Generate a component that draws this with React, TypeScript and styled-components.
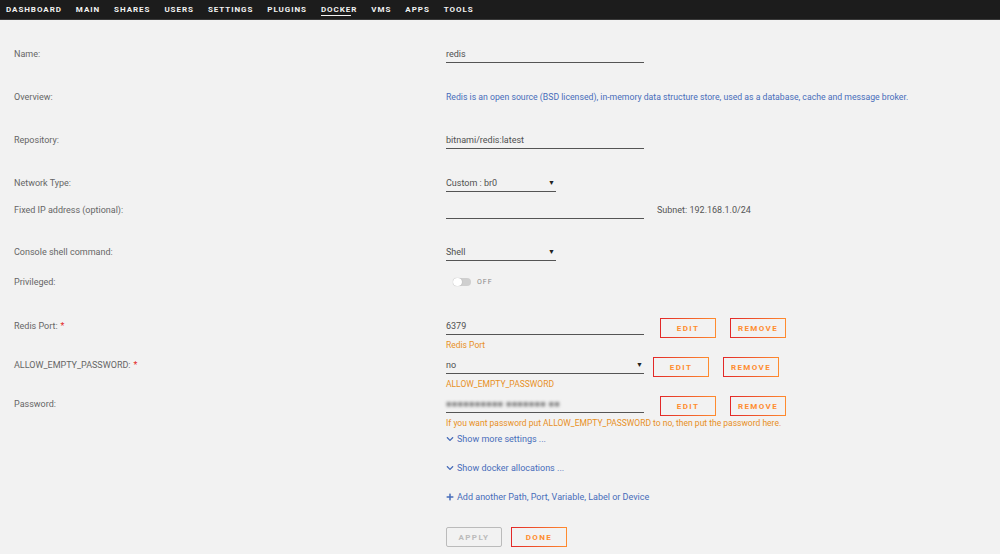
import React from 'react';
import styled, { createGlobalStyle } from 'styled-components';
import { FaChevronDown, FaPlus } from 'react-icons/fa';

const GlobalStyle = createGlobalStyle`
  html, body {
    margin: 0;
    padding: 0;
    background: #f2f2f2;
    font-family: Roboto, "Liberation Sans", sans-serif;
  }
`;

const StyledNav = styled.nav`
  display: flex;
  flex-direction: row;
  align-items: center;
  gap: 14px;
  height: 19px;
  padding: 0 6px;
  background-color: #1c1c1c;
  border-bottom: 1px solid #3a3a3a;
`;

const StyledNavItem = styled.span<{ $active?: boolean }>`
  position: relative;
  color: #f2f2f2;
  font-size: 8px;
  font-weight: 700;
  letter-spacing: 0.95px;
  line-height: 19px;

  &::after {
    content: '';
    display: ${(p) => (p.$active ? 'block' : 'none')};
    position: absolute;
    left: 0;
    bottom: 3px;
    width: 30px;
    height: 1.5px;
    background: #f2f2f2;
  }
`;

const StyledForm = styled.div`
  display: flex;
  flex-direction: column;
  padding: 26px 0 0 14px;
`;

const StyledRow = styled.div<{ $h: number }>`
  display: grid;
  grid-template-columns: 432px 1fr;
  align-items: start;
  height: ${(p) => p.$h}px;
`;

const StyledLabel = styled.div`
  color: #666;
  font-size: 9px;
  line-height: 16px;
`;

const StyledRequired = styled.span`
  color: #e22828;
  margin-left: 3px;
`;

const StyledValueCell = styled.div`
  display: flex;
  flex-direction: column;
`;

const StyledLine = styled.div<{ $gap?: number }>`
  display: flex;
  flex-direction: row;
  align-items: flex-start;
  gap: ${(p) => p.$gap ?? 16}px;
`;

const StyledInput = styled.div<{ $w: number }>`
  display: flex;
  flex-direction: row;
  justify-content: space-between;
  align-items: center;
  width: ${(p) => p.$w}px;
  height: 16px;
  border-bottom: 1px solid #555;
  color: #505050;
  font-size: 9px;
`;

const StyledCaret = styled.span`
  font-size: 7px;
  color: #222;
  margin-right: 1px;
`;

const StyledBlurred = styled.span`
  filter: blur(1.4px);
  color: #888;
  letter-spacing: 0.3px;
`;

const StyledText = styled.div<{ $color?: string; $size?: number }>`
  color: ${(p) => p.$color ?? '#444'};
  font-size: ${(p) => p.$size ?? 9}px;
  line-height: 16px;
`;

const StyledDesc = styled.div`
  color: #e8901e;
  font-size: 8.5px;
  line-height: 14px;
`;

const StyledLink = styled.div`
  display: flex;
  flex-direction: row;
  align-items: center;
  gap: 3px;
  color: #486dba;
  font-size: 9px;
  line-height: 16px;
`;

const StyledSwitchWrap = styled.div`
  display: flex;
  flex-direction: row;
  align-items: center;
  gap: 6px;
  height: 16px;
  padding-left: 7px;
`;

const StyledTrack = styled.span`
  position: relative;
  display: block;
  width: 18px;
  height: 8px;
  border-radius: 4px;
  background: #cfcfcf;

  &::before {
    content: '';
    position: absolute;
    left: 0;
    top: 0;
    width: 9px;
    height: 8px;
    border-radius: 4px;
    background: #fff;
    box-shadow: 0 0 1px rgba(0, 0, 0, 0.3);
  }
`;

const StyledSwitchText = styled.span`
  color: #888;
  font-size: 7px;
  letter-spacing: 1px;
`;

const StyledButton = styled.button<{ $disabled?: boolean }>`
  width: 56px;
  height: 20px;
  margin-top: -1px;
  padding: 0;
  background: transparent;
  border: 1px solid #bbb;
  border-image: ${(p) =>
    p.$disabled ? 'none' : 'linear-gradient(90deg, #e22828, #ff8c2f) 1'};
  border-radius: 2px;
  color: ${(p) => (p.$disabled ? '#bbb' : '#ff8c2f')};
  font-family: Roboto, "Liberation Sans", sans-serif;
  font-size: 8px;
  font-weight: 700;
  letter-spacing: 1.4px;
`;

const StyledButtons = styled.div<{ $gap?: number }>`
  display: flex;
  flex-direction: row;
  gap: ${(p) => p.$gap ?? 14}px;
  padding-top: 1px;
`;

const navItems = ['DASHBOARD', 'MAIN', 'SHARES', 'USERS', 'SETTINGS', 'PLUGINS', 'DOCKER', 'VMS', 'APPS', 'TOOLS'];

const Actions: React.FC = () => (
  <StyledButtons>
    <StyledButton>EDIT</StyledButton>
    <StyledButton>REMOVE</StyledButton>
  </StyledButtons>
);

const App: React.FC = () => {
  return (
    <>
      <GlobalStyle />
      <StyledNav>
        {navItems.map((item) => (
          <StyledNavItem key={item} $active={item === 'DOCKER'}>
            {item}
          </StyledNavItem>
        ))}
      </StyledNav>
      <StyledForm>
        <StyledRow $h={43}>
          <StyledLabel>Name:</StyledLabel>
          <StyledInput $w={198}>redis</StyledInput>
        </StyledRow>
        <StyledRow $h={43}>
          <StyledLabel>Overview:</StyledLabel>
          <StyledText $color="#486dba" $size={8.7}>
            Redis is an open source (BSD licensed), in-memory data structure store, used as a database, cache and message broker.
          </StyledText>
        </StyledRow>
        <StyledRow $h={43}>
          <StyledLabel>Repository:</StyledLabel>
          <StyledInput $w={198}>bitnami/redis:latest</StyledInput>
        </StyledRow>
        <StyledRow $h={27}>
          <StyledLabel>Network Type:</StyledLabel>
          <StyledInput $w={110}>
            Custom : br0<StyledCaret>▼</StyledCaret>
          </StyledInput>
        </StyledRow>
        <StyledRow $h={42}>
          <StyledLabel>Fixed IP address (optional):</StyledLabel>
          <StyledLine $gap={13}>
            <StyledInput $w={198} />
            <StyledText $color="#555">Subnet: 192.168.1.0/24</StyledText>
          </StyledLine>
        </StyledRow>
        <StyledRow $h={30}>
          <StyledLabel>Console shell command:</StyledLabel>
          <StyledInput $w={110}>
            Shell<StyledCaret>▼</StyledCaret>
          </StyledInput>
        </StyledRow>
        <StyledRow $h={44}>
          <StyledLabel>Privileged:</StyledLabel>
          <StyledSwitchWrap>
            <StyledTrack />
            <StyledSwitchText>OFF</StyledSwitchText>
          </StyledSwitchWrap>
        </StyledRow>
        <StyledRow $h={39}>
          <StyledLabel>
            Redis Port:<StyledRequired>*</StyledRequired>
          </StyledLabel>
          <StyledValueCell>
            <StyledLine $gap={16}>
              <StyledInput $w={198}>6379</StyledInput>
              <Actions />
            </StyledLine>
            <StyledDesc>Redis Port</StyledDesc>
          </StyledValueCell>
        </StyledRow>
        <StyledRow $h={39}>
          <StyledLabel>
            ALLOW_EMPTY_PASSWORD:<StyledRequired>*</StyledRequired>
          </StyledLabel>
          <StyledValueCell>
            <StyledLine $gap={9}>
              <StyledInput $w={198}>
                no<StyledCaret>▼</StyledCaret>
              </StyledInput>
              <Actions />
            </StyledLine>
            <StyledDesc>ALLOW_EMPTY_PASSWORD</StyledDesc>
          </StyledValueCell>
        </StyledRow>
        <StyledRow $h={35}>
          <StyledLabel>Password:</StyledLabel>
          <StyledValueCell>
            <StyledLine $gap={16}>
              <StyledInput $w={198}>
                <StyledBlurred>■■■■■■■■■■ ■■■■■■■ ■■</StyledBlurred>
              </StyledInput>
              <Actions />
            </StyledLine>
            <StyledDesc>
              If you want password put ALLOW_EMPTY_PASSWORD to no, then put the password here.
            </StyledDesc>
          </StyledValueCell>
        </StyledRow>
        <StyledRow $h={29}>
          <span />
          <StyledLink>
            <FaChevronDown size={8} />
            Show more settings ...
          </StyledLink>
        </StyledRow>
        <StyledRow $h={29}>
          <span />
          <StyledLink>
            <FaChevronDown size={8} />
            Show docker allocations ...
          </StyledLink>
        </StyledRow>
        <StyledRow $h={38}>
          <span />
          <StyledLink>
            <FaPlus size={8} />
            Add another Path, Port, Variable, Label or Device
          </StyledLink>
        </StyledRow>
        <StyledRow $h={27}>
          <span />
          <StyledButtons $gap={9}>
            <StyledButton $disabled>APPLY</StyledButton>
            <StyledButton>DONE</StyledButton>
          </StyledButtons>
        </StyledRow>
      </StyledForm>
    </>
  );
};

export default App;
